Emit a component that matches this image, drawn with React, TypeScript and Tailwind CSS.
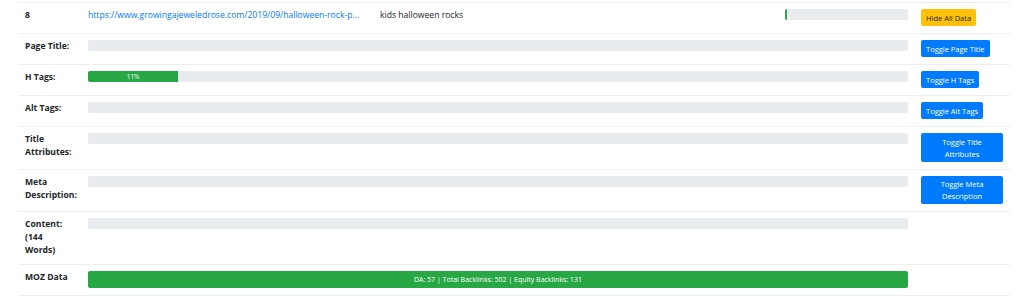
import React from "react";

const Btn = ({ children, yellow, wide, tight }: { children: React.ReactNode; yellow?: boolean; wide?: boolean; tight?: boolean }) => (
  <button
    className={
      (yellow ? "bg-[#ffc107] text-[#212529] " : "bg-[#007bff] text-white ") +
      (wide ? "w-[82px] " : "") +
      (tight ? "py-[2px] " : "py-[2.5px] ") +
      "block rounded-[2px] px-[5px] text-center text-[7.5px] leading-[12px]"
    }
  >
    {children}
  </button>
);

const Bar = ({ pct, label }: { pct: number; label?: string }) => (
  <div className="flex h-[11px] w-full overflow-hidden rounded-[2px] bg-[#e9ecef]">
    {pct > 0 && (
      <div
        className="flex items-center justify-center bg-[#28a745] text-[6.5px] leading-[11px] text-white"
        style={{ width: `${pct}%` }}
      >
        {label}
      </div>
    )}
  </div>
);

const rows: { label: React.ReactNode; btn?: string; wide?: boolean; tight?: boolean; pct?: number; pctLabel?: string }[] = [
  { label: "Page Title:", btn: "Toggle Page Title" },
  { label: "H Tags:", btn: "Toggle H Tags", pct: 11, pctLabel: "11%" },
  { label: "Alt Tags:", btn: "Toggle Alt Tags" },
  { label: <>Title<br />Attributes:</>, btn: "Toggle Title Attributes", wide: true },
  { label: <>Meta<br />Description:</>, btn: "Toggle Meta Description", wide: true, tight: true },
  { label: <>Content:<br />(144<br />Words)</> },
];

export default function App() {
  return (
    <div className="h-[300px] w-[1024px] bg-white pl-[18px] pt-[2px]" style={{ fontFamily: '"Open Sans", sans-serif' }}>
      <table className="table-fixed border-collapse text-[8.6px] leading-[13px] text-[#212529]" style={{ width: 992 }}>
        <colgroup>
          <col style={{ width: 63 }} />
          <col style={{ width: 292 }} />
          <col style={{ width: 405 }} />
          <col style={{ width: 137 }} />
          <col style={{ width: 95 }} />
        </colgroup>
        <tbody>
          <tr className="border-t border-[#eceef0] align-top">
            <td className="px-[7px] pt-[6px] pb-[7px] font-bold">8</td>
            <td className="px-[7px] pt-[6px] pb-[7px] text-[#007bff] whitespace-nowrap">
              https://www.growingajeweledrose.com/2019/09/halloween-rock-p...
            </td>
            <td className="px-[7px] pt-[6px] pb-[7px]">kids halloween rocks</td>
            <td className="px-[7px] pt-[6px] pb-[7px]">
              <div className="flex h-[11px] w-full overflow-hidden rounded-[2px] bg-[#e9ecef]">
                <div className="w-[2px] bg-[#28a745]" />
              </div>
            </td>
            <td className="pt-[6px] pb-[7px] pl-[6px]">
              <Btn yellow>Hide All Data</Btn>
            </td>
          </tr>
          {rows.map((r, i) => (
            <tr key={i} className="border-t border-[#eceef0] align-top">
              <td className="px-[7px] pt-[6px] pb-[7px] font-bold">{r.label}</td>
              <td colSpan={3} className="px-[7px] pt-[6px] pb-[7px]">
                <Bar pct={r.pct ?? 0} label={r.pctLabel} />
              </td>
              {r.btn && (
                <td className="pt-[6px] pb-[7px] pl-[6px]">
                  <Btn wide={r.wide} tight={r.tight}>{r.btn}</Btn>
                </td>
              )}
            </tr>
          ))}
          <tr className="border-y border-[#eceef0] align-top">
            <td className="px-[7px] pt-[6px] pb-[7px] font-bold">MOZ Data</td>
            <td colSpan={3} className="px-[7px] pt-[6px] pb-[7px]">
              <div className="flex h-[17px] w-full items-center justify-center rounded-[2px] bg-[#28a745] text-[7px] text-white">
                DA: 57 | Total Backlinks: 502 | Equity Backlinks: 131
              </div>
            </td>
          </tr>
        </tbody>
      </table>
    </div>
  );
}
